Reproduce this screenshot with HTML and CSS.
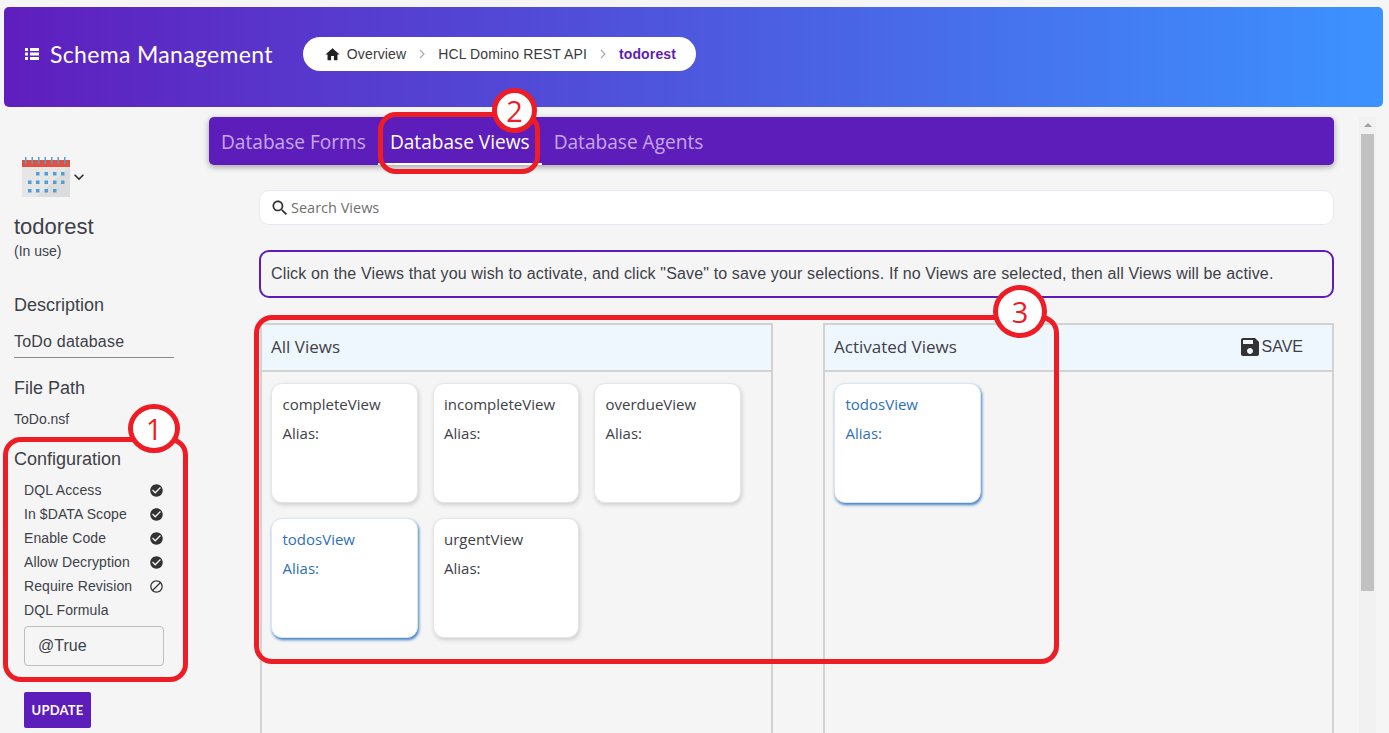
FILE: index.html
```html
<!DOCTYPE html>
<html lang="en">
<head>
  <meta charset="UTF-8" />
  <meta name="viewport" content="width=device-width, initial-scale=1.0" />
  <title>Schema Management</title>
  <link rel="stylesheet" href="styles.css">
</head>
<body>
  <header class="topbar">
    <svg class="topbar-icon" viewBox="0 0 14 12"><path d="M0 0h3v3H0zM5 0h9v3H5zM0 4.500h3v3H0zM5 4.500h9v3H5zM0 9h3v3H0zM5 9h9v3H5z"/></svg>
    <h1 class="topbar-title">Schema Management</h1>
    <nav class="crumbs">
      <svg class="crumb-home" viewBox="0 0 24 24"><path d="M10 20v-6h4v6h5v-8h3L12 3 2 12h3v8z"/></svg>
      <span>Overview</span>
      <svg class="crumb-sep" viewBox="0 0 8 12"><path d="M2 2l4 4-4 4"/></svg>
      <span>HCL Domino REST API</span>
      <svg class="crumb-sep" viewBox="0 0 8 12"><path d="M2 2l4 4-4 4"/></svg>
      <span class="crumb-current">todorest</span>
    </nav>
  </header>

  <div class="layout">
    <aside class="sidebar">
      <div class="db-logo">
        <svg class="calendar" viewBox="0 0 48 40">
          <rect y="3" width="48" height="37" fill="#e6e6e6"/>
          <path d="M48 10v30H14z" fill="#dcdcdc"/>
          <rect y="3" width="48" height="7" fill="#e0523f"/>
          <g fill="#4f9fd6">
            <rect x="3" width="1.5" height="7"/><rect x="9.5" width="1.5" height="7"/><rect x="16" width="1.5" height="7"/><rect x="22.500" width="1.5" height="7"/><rect x="29" width="1.5" height="7"/><rect x="35.500" width="1.5" height="7"/><rect x="42" width="1.500" height="7"/>
            <rect x="14" y="15" width="3.500" height="3.500"/><rect x="22.500" y="15" width="3.500" height="3.500"/><rect x="31" y="15" width="3.500" height="3.500"/><rect x="39" y="15" width="3.500" height="3.500"/>
            <rect x="6" y="23.500" width="3.500" height="3.500"/><rect x="14" y="23.500" width="3.500" height="3.500"/><rect x="22.500" y="23.500" width="3.500" height="3.500"/><rect x="31" y="23.500" width="3.500" height="3.500"/><rect x="39" y="23.500" width="3.500" height="3.500"/>
            <rect x="6" y="32" width="3.500" height="3.500"/><rect x="14" y="32" width="3.500" height="3.500"/><rect x="22.500" y="32" width="3.500" height="3.500"/><rect x="31" y="32" width="3.500" height="3.500"/>
          </g>
        </svg>
        <svg class="db-chevron" viewBox="0 0 24 24"><path d="M16.59 8.59L12 13.17 7.41 8.59 6 10l6 6 6-6z"/></svg>
      </div>
      <h2 class="db-name">todorest</h2>
      <p class="db-status">(In use)</p>

      <h3 class="side-label side-label-desc">Description</h3>
      <p class="db-desc">ToDo database</p>
      <h3 class="side-label side-label-path">File Path</h3>
      <p class="db-path">ToDo.nsf</p>

      <h3 class="side-label side-label-config">Configuration</h3>
      <ul class="config">
        <li>DQL Access <svg viewBox="0 0 24 24"><path d="M12 2C6.48 2 2 6.48 2 12s4.480 10 10 10 10-4.480 10-10S17.520 2 12 2zm-2 15l-5-5 1.410-1.410L10 14.170l7.590-7.590L19 8l-9 9z"/></svg></li>
        <li>In $DATA Scope <svg viewBox="0 0 24 24"><path d="M12 2C6.48 2 2 6.48 2 12s4.480 10 10 10 10-4.480 10-10S17.520 2 12 2zm-2 15l-5-5 1.410-1.410L10 14.170l7.590-7.590L19 8l-9 9z"/></svg></li>
        <li>Enable Code <svg viewBox="0 0 24 24"><path d="M12 2C6.48 2 2 6.48 2 12s4.480 10 10 10 10-4.480 10-10S17.520 2 12 2zm-2 15l-5-5 1.410-1.410L10 14.170l7.590-7.590L19 8l-9 9z"/></svg></li>
        <li>Allow Decryption <svg viewBox="0 0 24 24"><path d="M12 2C6.48 2 2 6.48 2 12s4.480 10 10 10 10-4.480 10-10S17.520 2 12 2zm-2 15l-5-5 1.410-1.410L10 14.170l7.590-7.590L19 8l-9 9z"/></svg></li>
        <li>Require Revision <svg viewBox="0 0 24 24"><path d="M12 2C6.48 2 2 6.48 2 12s4.480 10 10 10 10-4.480 10-10S17.520 2 12 2zM4 12c0-4.420 3.580-8 8-8 1.850 0 3.550.63 4.900 1.690L5.690 16.900C4.630 15.550 4 13.850 4 12zm8 8c-1.850 0-3.550-.63-4.900-1.690L18.310 7.100C19.370 8.450 20 10.150 20 12c0 4.420-3.580 8-8 8z"/></svg></li>
        <li>DQL Formula</li>
      </ul>
      <div class="formula">@True</div>
      <button class="update-btn">UPDATE</button>
    </aside>

    <main class="content">
      <nav class="tabs">
        <a class="tab">Database Forms</a>
        <a class="tab tab-active">Database Views</a>
        <a class="tab">Database Agents</a>
      </nav>

      <div class="body-area">
        <div class="search">
          <svg viewBox="0 0 24 24"><path d="M15.500 14h-.79l-.28-.27C15.410 12.590 16 11.110 16 9.500 16 5.910 13.090 3 9.500 3S3 5.910 3 9.500 5.910 16 9.500 16c1.610 0 3.090-.59 4.230-1.570l.27.28v.79l5 4.990L20.490 19l-4.990-5zm-6 0C7.010 14 5 11.990 5 9.500S7.010 5 9.500 5 14 7.010 14 9.500 11.990 14 9.500 14z"/></svg>
          <span>Search Views</span>
        </div>

        <p class="notice">Click on the Views that you wish to activate, and click "Save" to save your selections. If no Views are selected, then all Views will be active.</p>

        <div class="panels">
          <section class="panel">
            <div class="panel-head">All Views</div>
            <div class="cards">
              <div class="card"><p>completeView</p><p>Alias:</p></div>
              <div class="card"><p>incompleteView</p><p>Alias:</p></div>
              <div class="card"><p>overdueView</p><p>Alias:</p></div>
              <div class="card card-on"><p>todosView</p><p>Alias:</p></div>
              <div class="card"><p>urgentView</p><p>Alias:</p></div>
            </div>
          </section>
          <section class="panel">
            <div class="panel-head">
              Activated Views
              <span class="save">
                <svg viewBox="0 0 24 24"><path d="M17 3H5c-1.110 0-2 .9-2 2v14c0 1.100.89 2 2 2h14c1.100 0 2-.9 2-2V7l-4-4zm-5 16c-1.660 0-3-1.340-3-3s1.340-3 3-3 3 1.340 3 3-1.340 3-3 3zm3-10H5V5h10v4z"/></svg>
                SAVE
              </span>
            </div>
            <div class="cards">
              <div class="card card-on"><p>todosView</p><p>Alias:</p></div>
            </div>
          </section>
        </div>
      </div>
    </main>

    <div class="scrollbar">
      <div class="scroll-up"></div>
      <div class="scroll-thumb"></div>
    </div>
  </div>

  <!-- callouts painted on top of the screenshot -->
  <div class="mark mark-1"></div>
  <div class="mark mark-2"></div>
  <div class="mark mark-3"></div>
  <div class="badge badge-1">1</div>
  <div class="badge badge-2">2</div>
  <div class="badge badge-3">3</div>
</body>
</html>
```
FILE: styles.css
```css
:root {
  --purple: #5c1dba;
  --text: #3d4148;
  --line: #d2d2d2;
  --red: #ee1c25;
  --blue-text: #2f6fb8;
}

* {
  box-sizing: border-box;
}

html, body {
  height: 733px;
  overflow: hidden;
}

body {
  margin: 0;
  background: #f5f5f5;
  color: var(--text);
  font-family: "Liberation Sans", Arial, sans-serif;
}

p, h1, h2, h3, ul {
  margin: 0;
  padding: 0;
  font-weight: 400;
}

/* top bar */
.topbar {
  display: flex;
  align-items: center;
  height: 100px;
  margin: 7px 6px 0 4px;
  padding: 0 0 6px 21px;
  background: linear-gradient(90deg, #5f1ebe, #3c92ff);
  border-radius: 5px;
}

.topbar-icon {
  width: 14px;
  height: 12px;
  fill: #fff;
}

.topbar-title {
  margin-left: 11px;
  color: #fff;
  font-family: Lato, sans-serif;
  font-size: 23px;
  letter-spacing: 0.33px;
}

.crumbs {
  display: flex;
  align-items: center;
  height: 34px;
  margin-left: 30px;
  padding: 0 20px 0 21px;
  background: #fff;
  border-radius: 17px;
  font-size: 14px;
  letter-spacing: 0.13px;
  color: #3a3a3a;
}

.crumb-home {
  width: 17px;
  height: 17px;
  margin-right: 6px;
  fill: #222;
}

.crumb-sep {
  width: 8px;
  height: 12px;
  margin: 0 12px;
  fill: none;
  stroke: #aaa;
  stroke-width: 1.2;
}

.crumb-current {
  color: var(--purple);
  font-weight: 700;
}

/* page columns */
.layout {
  display: flex;
}

.sidebar {
  width: 209px;
  flex: none;
  padding: 50px 0 0 14px;
}

.db-logo {
  display: flex;
  align-items: center;
  padding-left: 8px;
}

.calendar {
  width: 48px;
  height: 40px;
}

.db-chevron {
  width: 20px;
  height: 20px;
  margin-left: -1px;
  fill: #333;
}

.db-name {
  margin-top: 17px;
  font-size: 22px;
  line-height: 26px;
}

.db-status {
  margin-top: 3px;
  font-size: 14px;
  line-height: 16px;
}

.side-label {
  font-size: 18px;
  line-height: 22px;
}

.side-label-desc {
  margin-top: 35px;
}

.db-desc {
  width: 160px;
  margin-top: 16px;
  padding-bottom: 5px;
  font-size: 16px;
  line-height: 20px;
  letter-spacing: 0.2px;
  border-bottom: 1px solid #8a8a8a;
}

.side-label-path {
  margin-top: 19px;
}

.db-path {
  margin-top: 12px;
  font-size: 14px;
  line-height: 16px;
}

.side-label-config {
  margin-top: 21px;
}

.config {
  list-style: none;
  width: 140px;
  margin: 8px 0 0 10px;
  font-size: 14px;
  letter-spacing: 0.1px;
}

.config li {
  display: flex;
  align-items: center;
  justify-content: space-between;
  height: 24px;
}

.config svg {
  width: 15px;
  height: 15px;
  fill: #333;
}

.formula {
  width: 140px;
  height: 40px;
  margin: 4px 0 0 10px;
  padding: 0 13px;
  border: 1px solid #bdbdbd;
  border-radius: 4px;
  font-size: 16px;
  line-height: 38px;
}

.update-btn {
  display: block;
  width: 67px;
  height: 36px;
  margin: 26px 0 0 10px;
  padding: 0;
  background: var(--purple);
  color: #fff;
  border: none;
  border-radius: 2px;
  font-family: Lato, sans-serif;
  font-size: 13px;
  font-weight: 700;
  letter-spacing: 0.2px;
}

.content {
  width: 1125px;
  flex: none;
  padding-top: 10px;
}

/* tabs */
.tabs {
  display: flex;
  height: 48px;
  background: var(--purple);
  border-radius: 5px;
  box-shadow: 0 2px 6px rgba(0, 0, 0, 0.35);
}

.tab {
  padding: 0 12px;
  font-family: "Open Sans", sans-serif;
  font-size: 19.1px;
  line-height: 50px;
  color: #c8a8ec;
}

.tab-active {
  color: #fff;
  border-bottom: 2px solid #fff;
}

.body-area {
  padding: 25px 0 0 50px;
}

.search {
  display: flex;
  align-items: center;
  height: 35px;
  padding-left: 10px;
  background: #fff;
  border: 1px solid #e8e8f4;
  border-radius: 10px;
  font-family: "Open Sans", sans-serif;
  font-size: 14.500px;
  color: #6f6f6f;
}

.search svg {
  width: 20px;
  height: 20px;
  margin-right: 1px;
  fill: #333;
}

.notice {
  height: 48px;
  margin-top: 25px;
  padding: 0 10px;
  border: 2px solid var(--purple);
  border-radius: 10px;
  font-size: 16px;
  line-height: 43px;
  letter-spacing: 0.145px;
  white-space: nowrap;
}

/* lists */
.panels {
  display: flex;
  justify-content: space-between;
  margin: 25px 0 0 1px;
}

.panel {
  width: 513px;
  height: 410px;
  border: 2px solid var(--line);
  border-bottom: none;
}

.panel:last-child {
  width: 511px;
}

.panel-head {
  display: flex;
  align-items: center;
  justify-content: space-between;
  height: 47px;
  padding: 0 29px 2px 9px;
  background: #eef6fe;
  border-bottom: 2px solid var(--line);
  font-family: "Open Sans", sans-serif;
  font-size: 17px;
}

.save {
  display: flex;
  align-items: center;
  font-family: "Liberation Sans", Arial, sans-serif;
  font-size: 16px;
}

.save svg {
  width: 24px;
  height: 24px;
  fill: #333;
}

.cards {
  display: flex;
  flex-wrap: wrap;
  gap: 15px;
  padding: 11px 9px;
}

.card {
  width: 146.500px;
  height: 120px;
  padding: 11px 10.500px;
  background: #fff;
  border: 1px solid #e6e6e6;
  border-radius: 11px;
  box-shadow: 1px 2px 4px rgba(0, 0, 0, 0.16);
  font-family: "Open Sans", sans-serif;
  font-size: 15px;
  line-height: 18px;
}

.card p + p {
  margin-top: 11px;
}

.card-on {
  color: var(--blue-text);
  border-color: #dce6f2;
  box-shadow: 1px 2px 3px #3f7fc4;
}

/* fake scrollbar */
.scrollbar {
  width: 17px;
  height: 616px;
  margin: 10px 0 0 25px;
  flex: none;
  background: #f1f1f1;
}

.scroll-up {
  position: relative;
  height: 17px;
}

.scroll-up::after {
  content: "";
  position: absolute;
  left: 5px;
  top: 6px;
  border: 4px solid transparent;
  border-top: none;
  border-bottom: 4px solid #a3a3a3;
}

.scroll-thumb {
  width: 13px;
  height: 457px;
  margin-left: 2px;
  background: #c1c1c1;
}

/* red callouts */
.mark {
  position: absolute;
  border: 5px solid var(--red);
  border-radius: 18px;
}

.mark-1 {
  left: 3px;
  top: 437px;
  width: 185px;
  height: 245px;
}

.mark-2 {
  left: 378px;
  top: 112px;
  width: 162px;
  height: 62px;
}

.mark-3 {
  left: 254px;
  top: 315px;
  width: 805px;
  height: 349px;
}

.badge {
  position: absolute;
  display: flex;
  align-items: center;
  justify-content: center;
  background: #fff;
  border: 5px solid var(--red);
  border-radius: 50%;
  color: var(--red);
  font-family: "Open Sans", sans-serif;
  font-size: 29px;
}

.badge-1 {
  left: 128px;
  top: 404px;
  width: 52px;
  height: 49px;
}

.badge-2 {
  left: 492px;
  top: 88px;
  width: 45px;
  height: 45px;
}

.badge-3 {
  left: 993px;
  top: 285px;
  width: 54px;
  height: 53px;
}
```
